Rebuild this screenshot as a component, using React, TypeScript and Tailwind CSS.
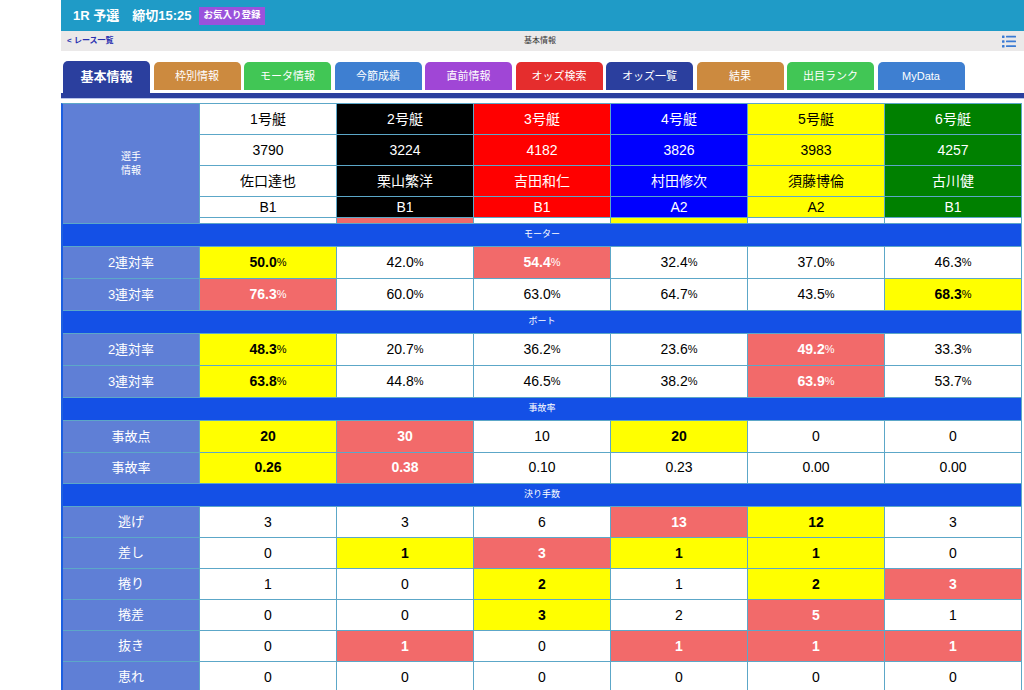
import React from 'react';

type Tone = 'w' | 'y' | 's';
type Cell = [string, Tone];

const FONT = { fontFamily: '"Liberation Sans", "Noto Sans CJK JP", sans-serif' };

const tabs = [
  { label: '基本情報', bg: 'bg-[#2b3f9e]', active: true },
  { label: '枠別情報', bg: 'bg-[#cc8a3f]' },
  { label: 'モータ情報', bg: 'bg-[#41c655]' },
  { label: '今節成績', bg: 'bg-[#3e7fd1]' },
  { label: '直前情報', bg: 'bg-[#a046d6]' },
  { label: 'オッズ検索', bg: 'bg-[#e52d2d]' },
  { label: 'オッズ一覧', bg: 'bg-[#2b3f9e]' },
  { label: '結果', bg: 'bg-[#cc8a3f]' },
  { label: '出目ランク', bg: 'bg-[#41c655]' },
  { label: 'MyData', bg: 'bg-[#3e7fd1]' },
];

const boats = [
  { no: '1号艇', id: '3790', name: '佐口達也', cls: 'B1', c: 'bg-white text-black' },
  { no: '2号艇', id: '3224', name: '栗山繁洋', cls: 'B1', c: 'bg-black text-white' },
  { no: '3号艇', id: '4182', name: '吉田和仁', cls: 'B1', c: 'bg-[#ff0000] text-white' },
  { no: '4号艇', id: '3826', name: '村田修次', cls: 'A2', c: 'bg-[#0000ff] text-white' },
  { no: '5号艇', id: '3983', name: '須藤博倫', cls: 'A2', c: 'bg-[#ffff00] text-black' },
  { no: '6号艇', id: '4257', name: '古川健', cls: 'B1', c: 'bg-[#008000] text-white' },
];

const sections: { title: string; pct?: boolean; h: string; rows: { label: string; cells: Cell[] }[] }[] = [
  {
    title: 'モーター',
    pct: true,
    h: 'h-[31px]',
    rows: [
      { label: '2連対率', cells: [['50.0', 'y'], ['42.0', 'w'], ['54.4', 's'], ['32.4', 'w'], ['37.0', 'w'], ['46.3', 'w']] },
      { label: '3連対率', cells: [['76.3', 's'], ['60.0', 'w'], ['63.0', 'w'], ['64.7', 'w'], ['43.5', 'w'], ['68.3', 'y']] },
    ],
  },
  {
    title: 'ボート',
    pct: true,
    h: 'h-[31px]',
    rows: [
      { label: '2連対率', cells: [['48.3', 'y'], ['20.7', 'w'], ['36.2', 'w'], ['23.6', 'w'], ['49.2', 's'], ['33.3', 'w']] },
      { label: '3連対率', cells: [['63.8', 'y'], ['44.8', 'w'], ['46.5', 'w'], ['38.2', 'w'], ['63.9', 's'], ['53.7', 'w']] },
    ],
  },
  {
    title: '事故率',
    h: 'h-[30.5px]',
    rows: [
      { label: '事故点', cells: [['20', 'y'], ['30', 's'], ['10', 'w'], ['20', 'y'], ['0', 'w'], ['0', 'w']] },
      { label: '事故率', cells: [['0.26', 'y'], ['0.38', 's'], ['0.10', 'w'], ['0.23', 'w'], ['0.00', 'w'], ['0.00', 'w']] },
    ],
  },
  {
    title: '決り手数',
    h: 'h-[30px]',
    rows: [
      { label: '逃げ', cells: [['3', 'w'], ['3', 'w'], ['6', 'w'], ['13', 's'], ['12', 'y'], ['3', 'w']] },
      { label: '差し', cells: [['0', 'w'], ['1', 'y'], ['3', 's'], ['1', 'y'], ['1', 'y'], ['0', 'w']] },
      { label: '捲り', cells: [['1', 'w'], ['0', 'w'], ['2', 'y'], ['1', 'w'], ['2', 'y'], ['3', 's']] },
      { label: '捲差', cells: [['0', 'w'], ['0', 'w'], ['3', 'y'], ['2', 'w'], ['5', 's'], ['1', 'w']] },
      { label: '抜き', cells: [['0', 'w'], ['1', 's'], ['0', 'w'], ['1', 's'], ['1', 's'], ['1', 's']] },
      { label: '恵れ', cells: [['0', 'w'], ['0', 'w'], ['0', 'w'], ['0', 'w'], ['0', 'w'], ['0', 'w']] },
    ],
  },
];

const toneClass: Record<Tone, string> = {
  w: 'bg-white text-black',
  y: 'bg-[#ffff00] text-black font-bold',
  s: 'bg-[#f26a6a] text-white font-bold',
};

function ListIcon() {
  return (
    <svg width="14" height="13" viewBox="0 0 14 13" fill="#3b7bd4">
      <rect x="0" y="0.5" width="2.5" height="2.5" rx="0.5" />
      <rect x="4" y="0.8" width="10" height="1.8" rx="0.5" />
      <rect x="0" y="5.2" width="2.5" height="2.5" rx="0.5" />
      <rect x="4" y="5.5" width="10" height="1.8" rx="0.5" />
      <rect x="0" y="10" width="2.5" height="2.5" rx="0.5" />
      <rect x="4" y="10.3" width="10" height="1.8" rx="0.5" />
    </svg>
  );
}

export default function App() {
  return (
    <div className="w-[1024px] h-[690px] overflow-hidden bg-white pl-[61px]" style={FONT}>
      {/* Header */}
      <div className="h-[31px] bg-[#1f9bc7] flex items-center pl-3 gap-2">
        <span className="text-white font-bold text-[13px]">1R 予選　締切15:25</span>
        <span className="bg-[#9a52dc] text-white text-[9.5px] font-bold px-1 h-[18px] flex items-center">お気入り登録</span>
      </div>
      <div className="h-[20px] bg-[#ebe9e9] relative flex items-center px-[6px]">
        <span className="text-[#2a30b0] text-[8px] font-bold">&lt; レース一覧</span>
        <span className="absolute left-[463px] text-[8px] text-[#333]">基本情報</span>
        <span className="ml-auto mr-[2px]"><ListIcon /></span>
      </div>

      {/* Tabs */}
      <div className="mt-[10px] flex items-end gap-[3.5px] pl-[2px] h-[32px]">
        {tabs.map((t) =>
          t.active ? (
            <div key={t.label} className={`${t.bg} w-[87px] h-[32px] rounded-t-[5px] flex items-center justify-center text-white font-bold text-[13px]`}>
              {t.label}
            </div>
          ) : (
            <div key={t.label} className="h-[31px] flex flex-col justify-start">
              <div className={`${t.bg} w-[87px] h-[28px] rounded-t-[5px] flex items-center justify-center text-white text-[11px]`}>
                {t.label}
              </div>
            </div>
          )
        )}
      </div>
      <div className="h-[5px] bg-[#2b3f9e]" />
      <div className="h-px bg-[#b9c4ea]" />

      {/* Table */}
      <div className="mt-[4px] w-[961px] bg-[#5ca7c8] border-l-2 border-l-[#1c5fe0] border-t border-r border-t-[#5ca7c8] border-r-[#5ca7c8] grid grid-cols-[136px_repeat(6,1fr)] gap-px text-[14px]">
        <div className="row-span-5 bg-[#5f7fd6] text-white text-[10px] leading-[14px] flex flex-col items-center justify-center">
          <span>選手</span>
          <span>情報</span>
        </div>
        {boats.map((b) => (
          <div key={b.no} className={`${b.c} h-[30px] flex items-center justify-center`}>{b.no}</div>
        ))}
        {boats.map((b) => (
          <div key={b.id} className={`${b.c} h-[30px] flex items-center justify-center`}>{b.id}</div>
        ))}
        {boats.map((b) => (
          <div key={b.name} className={`${b.c} h-[30px] flex items-center justify-center`}>{b.name}</div>
        ))}
        {boats.map((b) => (
          <div key={b.cls + b.no} className={`${b.c} h-[20px] flex items-center justify-center`}>{b.cls}</div>
        ))}
        {['bg-white', 'bg-[#f26a6a]', 'bg-white', 'bg-[#ffff00]', 'bg-white', 'bg-white'].map((c, i) => (
          <div key={i} className={`${c} h-[5px]`} />
        ))}

        {sections.map((s) => (
          <React.Fragment key={s.title}>
            <div className="col-span-7 h-[22px] bg-[#1450e6] text-white text-[9px] flex items-center justify-center">
              {s.title}
            </div>
            {s.rows.map((r) => (
              <React.Fragment key={s.title + r.label}>
                <div className={`${s.h} bg-[#5f7fd6] text-white text-[13px] flex items-center justify-center`}>{r.label}</div>
                {r.cells.map(([v, t], i) => (
                  <div key={i} className={`${s.h} ${toneClass[t]} flex items-center justify-center`}>
                    {v}
                    {s.pct && <span className="text-[11px] font-normal">%</span>}
                  </div>
                ))}
              </React.Fragment>
            ))}
          </React.Fragment>
        ))}
      </div>
    </div>
  );
}
